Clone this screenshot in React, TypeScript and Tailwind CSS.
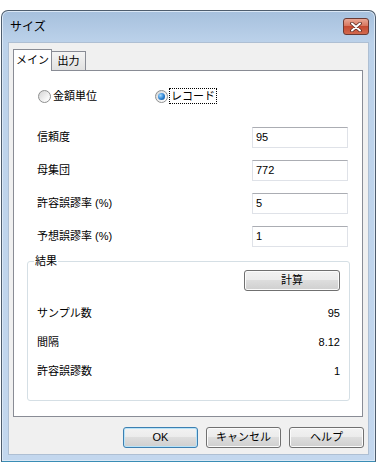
import React from 'react';

const FONT = { fontFamily: '"Liberation Sans", "Noto Sans CJK JP", sans-serif' };

const Radio: React.FC<{ checked?: boolean }> = ({ checked }) => (
  <span className="w-[13px] h-[13px] rounded-full border border-[#8e8f8f] bg-[linear-gradient(135deg,#d4d4d4,#f7f7f7_70%,#ffffff)] flex items-center justify-center shrink-0">
    {checked && (
      <span className="w-[7px] h-[7px] rounded-full bg-[radial-gradient(circle_at_35%_35%,#a6dcff,#2a7fd0_55%,#0c4a86)]" />
    )}
  </span>
);

const WinButton: React.FC<{ label: string; isDefault?: boolean; className?: string }> = ({ label, isDefault, className }) => (
  <button
    className={`h-[21px] rounded-[3px] border text-[11px] leading-none text-black flex items-center justify-center bg-[linear-gradient(#f2f2f2_0%,#ebebeb_50%,#dddddd_50%,#cfcfcf_100%)] ${
      isDefault
        ? 'border-[#3c7fb1] shadow-[inset_0_0_0_1px_#b8e3f8]'
        : 'border-[#707070] shadow-[inset_0_0_0_1px_#fbfbfb]'
    } ${className ?? ''}`}
  >
    {label}
  </button>
);

const InputRow: React.FC<{ label: string; value: string }> = ({ label, value }) => (
  <div className="flex items-center justify-between h-[21px] pl-[23px] pr-[14px]">
    <span className="text-[11px] leading-none">{label}</span>
    <div className="w-[96px] h-[21px] border border-[#dfe2e8] border-t-[#abadb3] bg-white flex items-center px-[3px] text-[11px]">
      {value}
    </div>
  </div>
);

const ResultRow: React.FC<{ label: string; value: string }> = ({ label, value }) => (
  <div className="flex items-center justify-between h-[14px] text-[11px] leading-none">
    <span>{label}</span>
    <span>{value}</span>
  </div>
);

export default function App() {
  return (
    <div className="min-h-screen bg-white pt-[10px] pl-[1px] text-black" style={FONT}>
      {/* Window frame */}
      <div className="w-[375px] h-[452px] rounded-t-[7px] border border-[#4e5d6e] border-b-[#3a8db5] bg-[linear-gradient(#a6c0dd,#bcd2ea_32px,#c3d7ee)] shadow-[inset_0_0_0_1px_#dbe8f6] flex flex-col">
        {/* Title bar */}
        <div className="h-[31px] flex items-center justify-between pl-[8px] pr-[6px]">
          <span className="text-[12px] leading-none">サイズ</span>
          <div className="w-[26px] h-[17px] rounded-[3px] border border-[#6b3a33] bg-[linear-gradient(#e9a795,#d8775f_45%,#c54a31_50%,#d2694e)] flex items-center justify-center">
            <svg width="12" height="10" viewBox="0 0 12 10">
              <path d="M2 1.5 L10 8.5 M10 1.5 L2 8.5" stroke="#5a2a22" strokeWidth="3.6" strokeLinecap="round" />
              <path d="M2 1.5 L10 8.5 M10 1.5 L2 8.5" stroke="#ffffff" strokeWidth="2" strokeLinecap="round" />
            </svg>
          </div>
        </div>

        {/* Client area */}
        <div className="flex-1 mx-[6px] mb-[6px] border border-[#aebfd3] bg-[#f0f0f0] flex flex-col pt-[6px] pl-[4px]">
          {/* Tabs */}
          <div className="flex items-end h-[21px]">
            <div className="relative z-10 w-[39px] h-[22px] -mb-[1px] border border-b-0 border-[#898c95] bg-white flex items-center justify-center text-[11px]">
              メイン
            </div>
            <div className="w-[34px] h-[19px] border border-l-0 border-b-0 border-[#898c95] bg-[linear-gradient(#f4f4f4,#e1e1e1)] flex items-center justify-center text-[11px]">
              出力
            </div>
          </div>

          {/* Tab panel */}
          <div className="w-[350px] h-[347px] border border-[#898c95] bg-white flex flex-col">
            {/* Radio row */}
            <div className="mt-[17px] h-[16px] flex items-center pl-[24px] text-[11px]">
              <div className="w-[117px] flex items-center gap-[2px]">
                <Radio />
                <span>金額単位</span>
              </div>
              <div className="flex items-center">
                <Radio checked />
                <span className="ml-[1px] h-[16px] px-[1px] border border-dotted border-black flex items-center">レコード</span>
              </div>
            </div>

            {/* Inputs */}
            <div className="mt-[23px] flex flex-col gap-[12px]">
              <InputRow label="信頼度" value="95" />
              <InputRow label="母集団" value="772" />
              <InputRow label="許容誤謬率 (%)" value="5" />
              <InputRow label="予想誤謬率 (%)" value="1" />
            </div>

            {/* Result group */}
            <fieldset className="mt-[7px] ml-[13px] mr-[12px] rounded-[3px] border border-[#d5dfe5] px-[6px] pb-[22px]">
              <legend className="px-[1px] text-[11px] leading-[14px]">結果</legend>
              <div className="px-[3px] flex flex-col">
                <WinButton label="計算" className="w-[96px] self-end mt-[2px]" />
                <div className="mt-[15px] flex flex-col gap-[15px]">
                  <ResultRow label="サンプル数" value="95" />
                  <ResultRow label="間隔" value="8.12" />
                  <ResultRow label="許容誤謬数" value="1" />
                </div>
              </div>
            </fieldset>
          </div>

          {/* Dialog buttons */}
          <div className="mt-[10px] flex justify-end gap-[8px] pr-[4px]">
            <WinButton label="OK" isDefault className="w-[75px]" />
            <WinButton label="キャンセル" className="w-[75px]" />
            <WinButton label="ヘルプ" className="w-[75px]" />
          </div>
        </div>
      </div>
    </div>
  );
}
